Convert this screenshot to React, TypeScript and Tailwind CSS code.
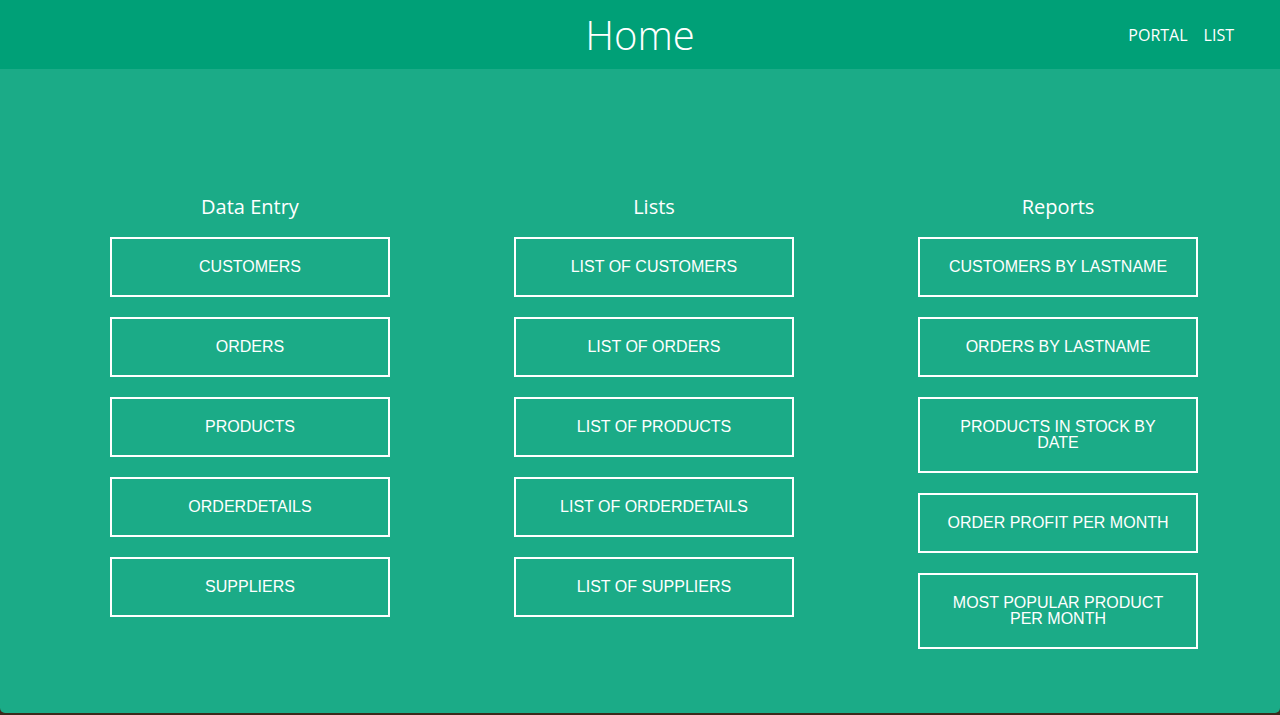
const dataEntry = ["CUSTOMERS", "ORDERS", "PRODUCTS", "ORDERDETAILS", "SUPPLIERS"];
const lists = [
  "LIST OF CUSTOMERS",
  "LIST OF ORDERS",
  "LIST OF PRODUCTS",
  "LIST OF ORDERDETAILS",
  "LIST OF SUPPLIERS",
];
const reports = [
  "CUSTOMERS BY LASTNAME",
  "ORDERS BY LASTNAME",
  "PRODUCTS IN STOCK BY DATE",
  "ORDER PROFIT PER MONTH",
  "MOST POPULAR PRODUCT PER MONTH",
];

const Column = ({ title, items }: { title: string; items: string[] }) => (
  <div className="flex flex-col items-center">
    <h2 className="text-[20px] leading-[28px] text-white font-['Open_Sans',sans-serif] mb-[16px]">
      {title}
    </h2>
    <div className="flex flex-col gap-[20px]">
      {items.map((item) => (
        <a
          key={item}
          href="#"
          className="w-[280px] border-2 border-white px-[24px] py-[20px] text-center text-[16px] leading-[16px] text-white font-['Liberation_Sans',Arial,sans-serif]"
        >
          {item}
        </a>
      ))}
    </div>
  </div>
);

export default function App() {
  return (
    <div className="h-[715px] flex flex-col bg-[#3b2a1c] overflow-hidden">
      <div className="flex-1 flex flex-col bg-[#1bab87] rounded-b-[5px] mb-[2px]">
        <header className="relative h-[69px] bg-[#00a077] flex items-center justify-center font-['Open_Sans',sans-serif]">
          <h1 className="text-[40px] font-light text-white leading-none">Home</h1>
          <nav className="absolute right-[46px] top-0 h-full flex items-center gap-[16px] text-[16px] text-white">
            <a href="#">PORTAL</a>
            <a href="#">LIST</a>
          </nav>
        </header>
        <main className="grid grid-cols-3 items-start pl-[48px] pr-[20px] pt-[124px]">
          <Column title="Data Entry" items={dataEntry} />
          <Column title="Lists" items={lists} />
          <Column title="Reports" items={reports} />
        </main>
      </div>
    </div>
  );
}
